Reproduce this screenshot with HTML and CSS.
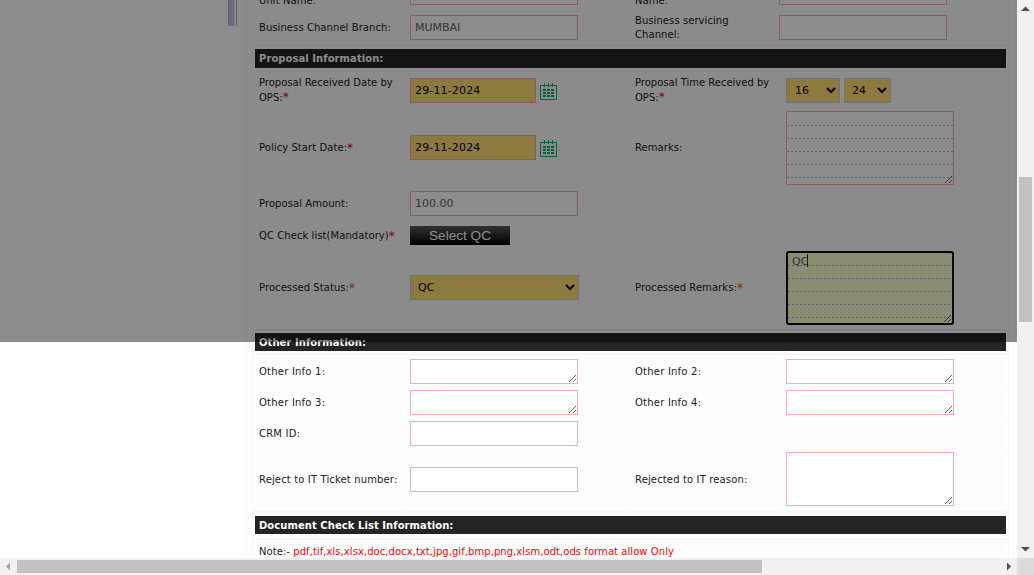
FILE: index.html
```html
<!DOCTYPE html>
<html lang="en">
<head>
<meta charset="utf-8">
<title>Proposal Information</title>
<link rel="stylesheet" href="styles.css">
</head>
<body>
<svg class="defs" width="0" height="0">
  <symbol id="calendar" viewBox="0 0 17 17">
    <path d="M.5 2.5h16v14H.5z" fill="none" stroke="#00b964"/>
    <path d="M4 0h1v4H4zM8 0h1v4H8zM12 0h1v4h-1zM3 6h3v2H3zM7 6h3v2H7zM11 6h3v2h-3zM3 9h3v2H3zM7 9h3v2H7zM11 9h3v2h-3zM3 12h3v2H3zM7 12h3v2H7zM11 12h3v2h-3z" fill="#00b964"/>
  </symbol>
</svg>
<div class="window">
  <div class="viewport">
    <aside class="sidebar"><div class="splitter"></div></aside>
    <main class="frame">
      <div class="form">
        <section class="rows rows-branch">
          <div class="cell">Unit Name:</div>
          <div class="cell"><input class="field"></div>
          <div class="cell">Name:</div>
          <div class="cell"><input class="field"></div>
          <div class="cell">Business Channel Branch:</div>
          <div class="cell"><input class="field" value="MUMBAI"></div>
          <div class="cell">Business servicing<br>Channel:</div>
          <div class="cell"><input class="field"></div>
        </section>
        <div class="rule"></div>
        <h2 class="heading heading-tall">Proposal Information:</h2>
        <div class="rule"></div>
        <section class="rows rows-proposal">
          <div class="cell tight"><span>Proposal Received Date by<br>OPS:<b class="req">*</b></span></div>
          <div class="cell"><input class="field date" value="29-11-2024"><svg class="cal"><use href="#calendar"/></svg></div>
          <div class="cell tight"><span>Proposal Time Received by<br>OPS:<b class="req pink">*</b></span></div>
          <div class="cell"><select class="pick hour"><option>16</option></select><select class="pick minute"><option>24</option></select></div>

          <div class="cell">Policy Start Date:<b class="req">*</b></div>
          <div class="cell high"><input class="field date" value="29-11-2024"><svg class="cal"><use href="#calendar"/></svg></div>
          <div class="cell">Remarks:</div>
          <div class="cell"><textarea class="area lined"></textarea></div>

          <div class="cell">Proposal Amount:</div>
          <div class="cell"><input class="field" value="100.00"></div>
          <div class="cell"></div>
          <div class="cell"></div>

          <div class="cell low">QC Check list(Mandatory)<b class="req">*</b></div>
          <div class="cell low"><button class="button">Select QC</button></div>
          <div class="cell"></div>
          <div class="cell"></div>

          <div class="cell">Processed Status:<b class="req orange">*</b></div>
          <div class="cell high"><select class="pick status"><option>QC</option></select></div>
          <div class="cell">Processed Remarks:<b class="req orange">*</b></div>
          <div class="cell"><div class="editing"><textarea class="area lined active">QC</textarea><span class="caret"></span></div></div>
        </section>
        <div class="rule"></div>
        <h2 class="heading">Other Information:</h2>
        <div class="rule"></div>
        <section class="rows rows-other">
          <div class="cell loose">Other Info 1:</div>
          <div class="cell"><textarea class="area short"></textarea></div>
          <div class="cell loose">Other Info 2:</div>
          <div class="cell"><textarea class="area short"></textarea></div>

          <div class="cell loose">Other Info 3:</div>
          <div class="cell"><textarea class="area short"></textarea></div>
          <div class="cell loose">Other Info 4:</div>
          <div class="cell"><textarea class="area short"></textarea></div>

          <div class="cell loose">CRM ID:</div>
          <div class="cell"><input class="field"></div>
          <div class="cell"></div>
          <div class="cell"></div>

          <div class="cell reject">Reject to IT Ticket number:</div>
          <div class="cell"><input class="field"></div>
          <div class="cell reject">Rejected to IT reason:</div>
          <div class="cell"><textarea class="area reason"></textarea></div>
        </section>
        <div class="rule rule-thick"></div>
        <h2 class="heading">Document Check List Information:</h2>
        <div class="rule rule-note"></div>
        <p class="note">Note:- <span class="formats">pdf,tif,xls,xlsx,doc,docx,txt,jpg,gif,bmp,png,xlsm,odt,ods format allow Only</span></p>
      </div>
    </main>
    <div class="overlay"></div>
  </div>
  <div class="vbar">
    <svg class="arrow" viewBox="0 0 17 17"><path d="M4 11l4.5-4.5L13 11z" fill="#505050"/></svg>
    <div class="vthumb"></div>
    <svg class="arrow" viewBox="0 0 17 17"><path d="M4 6l4.500 4.500L13 6z" fill="#505050"/></svg>
  </div>
  <div class="hbar">
    <svg class="arrow" viewBox="0 0 17 17"><path d="M10 4.500L6 8.500l4 4z" fill="#a3a3a3"/></svg>
    <div class="hthumb"></div>
    <svg class="arrow" viewBox="0 0 17 17"><path d="M7 4.500l4 4-4 4z" fill="#505050"/></svg>
  </div>
  <div class="corner"></div>
</div>
</body>
</html>
```

FILE: styles.css
```css
* { box-sizing: border-box; }

body {
  margin: 0;
  overflow: hidden;
  background: #fff;
  color: #222;
  font: 10px/14px Verdana, "DejaVu Sans", sans-serif;
}

.defs { position: absolute; }

.window {
  display: grid;
  grid-template: 558px 17px / 1017px 17px;
}

.viewport {
  position: relative;
  display: flex;
  overflow: hidden;
}

.sidebar {
  width: 246px;
  padding-left: 228px;
}

.splitter {
  width: 9px;
  height: 26px;
  background: linear-gradient(90deg, #b9b5d3, #cbc9de 6px, #fff 7px, #fff 8px, #aaa 8px);
}

.frame {
  width: 769px;
  height: 558px;
  padding: 0 5px;
  border: solid #f7f7f7;
  border-width: 0 1px;
}

.form {
  height: 558px;
  border: solid #f7f7f7;
  border-width: 0 1px;
}

.rows {
  display: grid;
  gap: 2px;
  grid-template-columns: 149px 223px 149px 224px;
  margin: 2px;
}

.rows-branch {
  grid-template-columns: 149px 223px 142px 231px;
  grid-template-rows: 8px 35px;
  margin: 0 2px;
}

.rows-branch .cell:nth-child(-n+4) {
  align-items: flex-end;
  padding-bottom: 3px;
}

.rows-branch .cell:nth-child(-n+4):nth-child(odd) { padding-bottom: 0; }

.rows-proposal { grid-template-rows: 33px 78px 29px 27px 78px; }
.rows-other { grid-template-rows: 29px 29px 29px 58px; }

.cell {
  display: flex;
  align-items: center;
  min-width: 0;
  padding: 0 4px;
  background: #fdfdfd;
  white-space: nowrap;
  letter-spacing: .07px;
}

.tight { letter-spacing: 0; }
.loose { letter-spacing: .22px; }
.reject { padding-top: 1px; letter-spacing: .14px; }
.low { padding-top: 4px; }
.high { padding-bottom: 1px; }

.rule {
  height: 2px;
  margin-bottom: 2px;
  background: #f7f7f7;
}

.rule-thick { height: 4px; }
.rule-note { margin-top: 4px; }

.heading {
  height: 18px;
  margin: 0 2px 2px;
  padding: 0 4px;
  background: #242424;
  color: #fff;
  font-size: 10px;
  font-weight: bold;
  line-height: 19px;
  letter-spacing: .06px;
}

.heading-tall { height: 19px; line-height: 19px; }

.req { color: #e00020; font-weight: normal; font-size: 12px; }
.pink { color: #e0006a; }
.orange { color: #e04800; }

.field, .area {
  flex: none;
  width: 168px;
  height: 25px;
  margin: 0;
  padding: 0 4px;
  border: 1px solid #fba8af;
  border-radius: 0;
  background-color: #fff;
  color: #666;
  font: 11px/13px Verdana, "DejaVu Sans", sans-serif;
}

.date {
  width: 126px;
  background-color: #ffde73;
  color: #000;
  letter-spacing: .15px;
}

.cal {
  flex: none;
  width: 17px;
  height: 17px;
  margin: 2px 0 0 4px;
}

.pick {
  height: 25px;
  margin: 0 4px 0 0;
  padding: 0 0 0 4px;
  border: 1px solid #ccced4;
  border-radius: 0;
  background-color: #ffde73;
  color: #000;
  font: 11px Verdana, "DejaVu Sans", sans-serif;
}

.hour { width: 54px; }
.minute { width: 47px; padding-left: 3px; }
.status { width: 169px; padding-left: 3px; }

.button {
  width: 100px;
  height: 19px;
  padding: 0;
  border: 0;
  background: linear-gradient(#5a5a5a, #000);
  color: #fff;
  font: 13.6px/19px "Liberation Sans", Arial, sans-serif;
}

.area { display: block; padding: 2px 4px; overflow: hidden; }
.reason { height: 54px; }

.lined {
  --paper: #fff;
  height: 74px;
  background-color: var(--paper);
  background-image:
    repeating-linear-gradient(to bottom, var(--paper) 0 12px, transparent 12px 13px),
    repeating-linear-gradient(to right, #9fb4e2 0 2px, var(--paper) 2px 4px);
  background-position: 0 1px;
  background-repeat: no-repeat;
}

.active {
  --paper: #ffffcf;
  border: 2px solid #101010;
  border-radius: 3px;
  padding: 2px 4px;
  background-position: 0 0;
}

.editing { position: relative; }

.caret {
  position: absolute;
  left: 21px;
  top: 3px;
  width: 1px;
  height: 13px;
  background: #333;
}

.note {
  margin: 2px 2px 0;
  padding: 3px 4px;
  background: #fdfdfd;
  letter-spacing: .06px;
}

.formats { color: #f00; }

.overlay {
  position: absolute;
  top: 0;
  left: 0;
  width: 1017px;
  height: 342px;
  background: rgba(0, 0, 0, .45);
}

.vbar, .hbar {
  display: flex;
  justify-content: space-between;
  background: #f1f1f1;
}

.vbar { flex-direction: column; }
.arrow { flex: none; width: 17px; height: 17px; }
.vthumb { width: 13px; height: 145px; margin: 160px 2px auto; background: #c1c1c1; }
.hthumb { width: 745px; height: 13px; margin: 2px auto 2px 0; background: #c1c1c1; }
.corner { background: #dcdcdc; }
```
